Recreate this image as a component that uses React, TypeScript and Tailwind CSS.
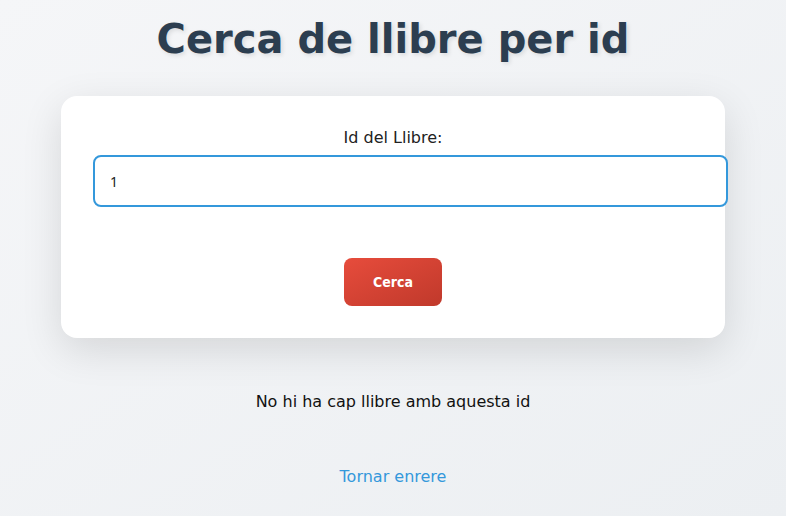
import { useState } from 'react';

export default function App() {
  const [bookId, setBookId] = useState('1');

  return (
    <div className="min-h-screen bg-gradient-to-br from-[#f5f6f8] to-[#eceff2] px-[61px] pt-[16px] pb-8 font-['DejaVu_Sans',sans-serif]">
      <h1 className="text-center text-[40px] leading-[47px] font-bold text-[#2c3e50] [text-shadow:2px_2px_4px_rgba(0,0,0,0.1)]">
        Cerca de llibre per id
      </h1>

      <div className="mt-[33px] rounded-2xl bg-white p-8 shadow-[0_12px_40px_rgba(0,0,0,0.12)]">
        <label className="block text-center text-base leading-[19px] text-[#222]">Id del Llibre:</label>
        <input
          type="text"
          value={bookId}
          onChange={(e) => setBookId(e.target.value)}
          className="mt-2 block h-[52px] w-[635px] max-w-none rounded-lg border-2 border-[#3498db] bg-white px-[15px] font-['Noto_Sans',sans-serif] text-sm text-[#222] outline-none"
        />
        <div className="mt-[51px] flex justify-center">
          <button className="h-12 w-[98px] rounded-lg bg-gradient-to-br from-[#e74c3c] to-[#c0392b] font-['DejaVu_Sans',sans-serif] text-sm font-bold text-white [font-stretch:condensed]">
            Cerca
          </button>
        </div>
      </div>

      <p className="mt-[52px] text-center text-base text-[#111]">No hi ha cap llibre amb aquesta id</p>

      <div className="mt-[51px] text-center">
        <a href="#" className="text-base text-[#3498db]">
          Tornar enrere
        </a>
      </div>
    </div>
  );
}
